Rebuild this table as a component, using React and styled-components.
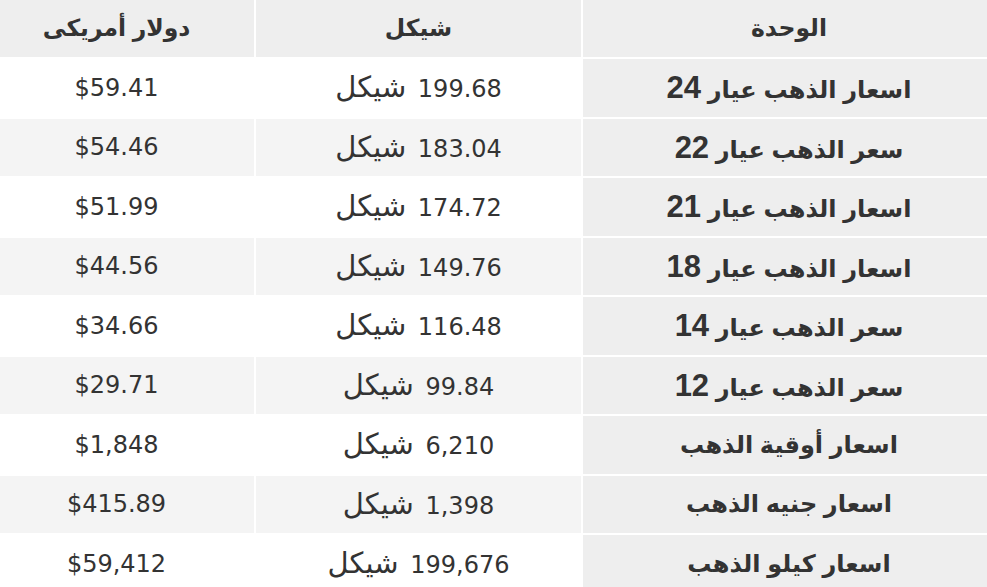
import React from "react";
import styled, { createGlobalStyle } from "styled-components";

const Global = createGlobalStyle`
  html, body { margin: 0; padding: 0; background: #fff; overflow: hidden; }
  body { font-family: "DejaVu Sans", Verdana, sans-serif; }
`;

const Table = styled.table`
  direction: rtl;
  table-layout: fixed;
  width: 1020px;
  margin: -2.5px 0 0 -23px;
  border-collapse: separate;
  border-spacing: 2px;
  color: #333;
`;

const HeadCell = styled.th`
  height: 57.5px;
  padding: 0;
  background: #eeeeee;
  font-family: "Liberation Sans", "DejaVu Sans", Arial, sans-serif;
  font-weight: bold;
  font-size: 23.5px;
  text-align: center;
  vertical-align: middle;
`;

const UnitCell = styled.td`
  height: 57.5px;
  padding: 0;
  background: #eeeeee;
  font-family: "Liberation Sans", "DejaVu Sans", Arial, sans-serif;
  font-weight: bold;
  font-size: 24px;
  text-align: center;
  vertical-align: middle;
  line-height: 1;
`;

const Karat = styled.span`
  font-size: 31px;
`;

const ValueCell = styled.td`
  height: 57.5px;
  padding: 0;
  background: ${(p) => (p.$alt ? "#f4f4f4" : "#ffffff")};
  font-family: "DejaVu Sans", Verdana, sans-serif;
  font-size: 24px;
  text-align: center;
  vertical-align: middle;
  line-height: 1;
`;

const Currency = styled.span`
  font-size: 29px;
  margin-right: 4px;
`;

const rows = [
  ["اسعار الذهب عيار", "24", "199.68", "$59.41"],
  ["سعر الذهب عيار", "22", "183.04", "$54.46"],
  ["اسعار الذهب عيار", "21", "174.72", "$51.99"],
  ["اسعار الذهب عيار", "18", "149.76", "$44.56"],
  ["سعر الذهب عيار", "14", "116.48", "$34.66"],
  ["سعر الذهب عيار", "12", "99.84", "$29.71"],
  ["اسعار أوقية الذهب", null, "6,210", "$1,848"],
  ["اسعار جنيه الذهب", null, "1,398", "$415.89"],
  ["اسعار كيلو الذهب", null, "199,676", "$59,412"],
];

export default function App() {
  return (
    <>
      <Global />
      <Table>
        <colgroup>
          <col style={{ width: 412 }} />
          <col style={{ width: 325 }} />
          <col style={{ width: 275 }} />
        </colgroup>
        <thead>
          <tr>
            <HeadCell>الوحدة</HeadCell>
            <HeadCell>شيكل</HeadCell>
            <HeadCell>دولار أمريكى</HeadCell>
          </tr>
        </thead>
        <tbody>
          {rows.map((r, i) => (
            <tr key={i}>
              <UnitCell>
                {r[0]}
                {r[1] && <> <Karat>{r[1]}</Karat></>}
              </UnitCell>
              <ValueCell $alt={i % 2 === 1}>
                {r[2]} <Currency>شيكل</Currency>
              </ValueCell>
              <ValueCell $alt={i % 2 === 1} dir="ltr">{r[3]}</ValueCell>
            </tr>
          ))}
        </tbody>
      </Table>
    </>
  );
}
